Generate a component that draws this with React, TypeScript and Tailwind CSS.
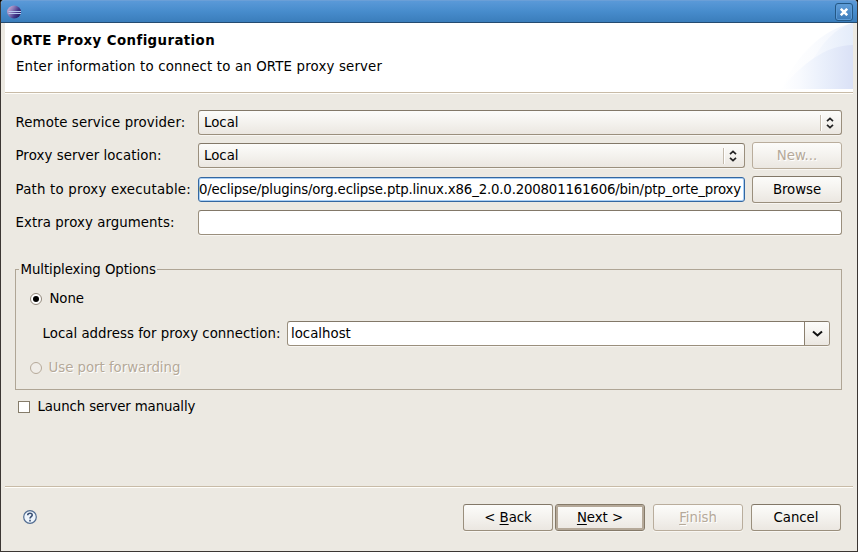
import type { ReactNode } from "react";

const raised = "bg-gradient-to-b from-[#fcfcfa] via-[#f4f2ee] to-[#ebe7e1]";
const frame = "rounded-[3px] border border-[#9a8f7d] border-t-[#827868] shadow-[0_1px_0_#f8f6f2]";

function Button({ children, disabled, primary, className = "" }: { children: ReactNode; disabled?: boolean; primary?: boolean; className?: string }) {
  return (
    <button
      disabled={disabled}
      className={`flex h-[27px] w-[90px] shrink-0 items-center justify-center pb-[1px] tracking-[-0.05px] ${raised} ${
        primary
          ? "rounded-[3px] border border-[#857a69] shadow-[inset_0_0_0_2px_#b5a999,0_1px_0_#f8f6f2]"
          : disabled
            ? "rounded-[3px] border border-[#b9ad9c] shadow-[0_1px_0_#f8f6f2]"
            : frame
      } ${disabled ? "text-[#b5a999] [text-shadow:1px_1px_0_#ffffff]" : ""} ${className}`}
    >
      {children}
    </button>
  );
}

function Key({ children }: { children: string }) {
  return <span className="underline decoration-1 underline-offset-2">{children}</span>;
}

function Select({ value, className }: { value: string; className: string }) {
  return (
    <div className={`flex h-[25px] items-center pl-[5px] ${raised} ${frame} ${className}`}>
      <span className="grow pb-[1px]">{value}</span>
      <span className="h-4 w-[2px] border-l border-r border-l-[#c4bbad] border-r-white" />
      <svg className="mr-[7px] ml-1 shrink-0" width="8" height="12" viewBox="0 0 8 12" fill="none" stroke="#222" strokeWidth="1.7">
        <path d="M1 4.2 L4 1.4 L7 4.2 M1 7.8 L4 10.6 L7 7.8" />
      </svg>
    </div>
  );
}

function Label({ children, className = "" }: { children: string; className?: string }) {
  return <span className={`w-[183px] shrink-0 pl-[0.5px] ${className}`}>{children}</span>;
}

export default function App() {
  return (
    <div className="h-[552px] w-[858px] overflow-hidden bg-black font-['DejaVu_Sans',sans-serif] text-[13.33px] leading-[17px] whitespace-nowrap text-black">
      <div className="flex h-[552px] w-[858px] flex-col overflow-hidden rounded-t-[4px] border-r border-b border-l border-[#3b3633] bg-[#ece9e2]">
        <header className="flex h-[23px] shrink-0 items-center justify-between border-t border-b border-t-[#6b9fd7] border-b-[#244b70] bg-gradient-to-b from-[#5a99d8] via-[#478ccc] to-[#3a7dbb] pr-1 pl-[6px]">
          <svg width="15" height="14" viewBox="0 0 15 14">
            <defs>
              <linearGradient id="planet" x1="0" y1="0" x2="1" y2=".55">
                <stop offset="0" stopColor="#e6bcd8" />
                <stop offset=".4" stopColor="#9180bb" />
                <stop offset=".75" stopColor="#43388a" />
                <stop offset="1" stopColor="#2a2068" />
              </linearGradient>
            </defs>
            <ellipse cx="7.1" cy="7" rx="7" ry="6.4" fill="url(#planet)" />
            <path d="M1.5 6.5H14 M1.5 8.5H14" stroke="#b7c9ee" />
          </svg>
          <button className="flex h-[18px] w-[18px] items-center justify-center rounded-[3px] border border-[#245784] bg-gradient-to-b from-[#609eda] to-[#3b7ab8] shadow-[inset_0_0_0_1px_#5a9ad6]">
            <svg width="8" height="8" viewBox="0 0 8 8" stroke="white" strokeWidth="2.5">
              <path d="M.8 .8 L7.2 7.2 M7.2 .8 L.8 7.2" />
            </svg>
          </button>
        </header>

        <div className="mr-[4px] ml-[4px] flex h-[71px] shrink-0 justify-between border-b border-[#fffefa] bg-white shadow-[inset_0_-1px_0_#c8bba7]">
          <div className="pt-[9px] pl-[6px]">
            <h1 className="font-bold tracking-[0.41px]">ORTE Proxy Configuration</h1>
            <p className="mt-[9px] ml-[5px] tracking-[0.16px]">Enter information to connect to an ORTE proxy server</p>
          </div>
          <svg className="shrink-0" width="74" height="66" viewBox="0 0 74 66">
            <defs>
              <linearGradient id="arcBack">
                <stop offset="0" stopColor="#ffffff" />
                <stop offset=".4" stopColor="#fbfcfe" />
                <stop offset="1" stopColor="#f0f4fd" />
              </linearGradient>
              <linearGradient id="arcMid">
                <stop offset="0" stopColor="#f8fafe" />
                <stop offset="1" stopColor="#e4ecfa" />
              </linearGradient>
              <linearGradient id="arcFront">
                <stop offset="0" stopColor="#ffffff" />
                <stop offset=".25" stopColor="#f8fafe" />
                <stop offset=".6" stopColor="#e9effb" />
                <stop offset="1" stopColor="#dae1f6" />
              </linearGradient>
            </defs>
            <path d="M2 66 C16 35 42 6 74 0 V66Z" fill="url(#arcBack)" />
            <path d="M32 40 C43 20 56 5 74 0 V50Z" fill="url(#arcMid)" />
            <path d="M2 66 C22 42 46 22 74 22 V66Z" fill="url(#arcFront)" />
          </svg>
        </div>

        <main className="flex h-[392px] shrink-0 flex-col pr-[15px] pl-[14px]">
          <div className="mt-[16px] flex h-[25px] items-center">
            <Label className="tracking-[0.1px]">Remote service provider:</Label>
            <Select value="Local" className="grow" />
          </div>
          <div className="mt-[7px] flex h-[27px] items-center">
            <Label className="tracking-[0.07px]">Proxy server location:</Label>
            <Select value="Local" className="mr-[7px] grow" />
            <Button disabled>New...</Button>
          </div>
          <div className="mt-[7px] flex h-[27px] items-center">
            <Label className="tracking-[0.21px]">Path to proxy executable:</Label>
            <div className="mr-[7px] flex h-[25px] grow basis-0 items-center justify-end overflow-hidden rounded-[3px] border border-[#3467a0] bg-white pr-[3px] pb-px shadow-[inset_0_0_0_1px_#a9cff5]">
              <span className="tracking-[-0.185px]">0/eclipse/plugins/org.eclipse.ptp.linux.x86_2.0.0.200801161606/bin/ptp_orte_proxy</span>
            </div>
            <Button>Browse</Button>
          </div>
          <div className="mt-[7px] flex h-[25px] items-center">
            <Label className="tracking-[0.07px]">Extra proxy arguments:</Label>
            <div className={`h-[25px] grow bg-white ${frame}`} />
          </div>

          <fieldset className="mt-[26px] flex h-[129px] shrink-0 flex-col border border-[#afa595]">
            <legend className="ml-[3px] h-[17px] px-[1.5px] tracking-[-0.08px]">Multiplexing Options</legend>
            <label className="mt-[12px] ml-[14px] flex h-[17px] items-center">
              <svg width="12" height="12" viewBox="0 0 12 12">
                <circle cx="6" cy="6" r="5.5" fill="white" stroke="#91877a" />
                <circle cx="6" cy="6" r="3" />
              </svg>
              <span className="ml-[7.5px] tracking-[-0.1px]">None</span>
            </label>
            <div className="mt-[14px] mr-[11px] ml-[26px] flex h-[25px] items-center">
              <span className="w-[245px] shrink-0 pl-[0.5px] tracking-[0.02px]">Local address for proxy connection:</span>
              <div className={`flex h-[25px] grow overflow-hidden bg-white ${frame}`}>
                <span className="grow pt-[3px] pl-[3px]">localhost</span>
                <span className={`flex w-[25px] items-center justify-center border-l border-[#8b806f] ${raised}`}>
                  <svg width="11" height="8" viewBox="0 0 11 8" fill="none" stroke="#111" strokeWidth="2">
                    <path d="M1 1.5 L5.5 5.5 L10 1.5" />
                  </svg>
                </span>
              </div>
            </div>
            <label className="mt-[13px] ml-[14px] flex h-[17px] items-center text-[#b5a999] [text-shadow:1px_1px_0_#ffffff]">
              <svg width="12" height="12" viewBox="0 0 12 12">
                <circle cx="6" cy="6" r="5.5" fill="#f0ede8" stroke="#b5a999" />
              </svg>
              <span className="ml-[6.5px] tracking-[-0.03px]">Use port forwarding</span>
            </label>
          </fieldset>
          <label className="mt-[8px] ml-[3px] flex h-[17px] items-center">
            <span className="mt-px h-3 w-3 border border-[#857c6a] bg-white" />
            <span className="ml-[7.5px] tracking-[-0.12px]">Launch server manually</span>
          </label>
        </main>

        <footer className="mr-[4px] ml-[4px] flex grow items-start border-t border-[#c8bba7] pt-[17px] pr-[12px] pl-[18px] shadow-[inset_0_1px_0_#fffefa]">
          <svg className="mt-[6px] mr-auto" width="14" height="14" viewBox="0 0 14 14">
            <circle cx="7" cy="7" r="6.3" fill="#eef5fc" stroke="#526d91" strokeWidth="1.2" />
            <path d="M4.7 5.3 C4.8 2.5 9.3 2.7 9.2 5.1 C9.1 6.7 7 6.6 7 8.6 M7 9.8V11.4" fill="none" stroke="#394f73" strokeWidth="1.6" />
          </svg>
          <Button><span>&lt; <Key>B</Key>ack</span></Button>
          <Button primary className="ml-[2px]"><span><Key>N</Key>ext &gt;</span></Button>
          <Button disabled className="ml-[8px]"><span><Key>F</Key>inish</span></Button>
          <Button className="ml-[8px]">Cancel</Button>
        </footer>
      </div>
    </div>
  );
}
